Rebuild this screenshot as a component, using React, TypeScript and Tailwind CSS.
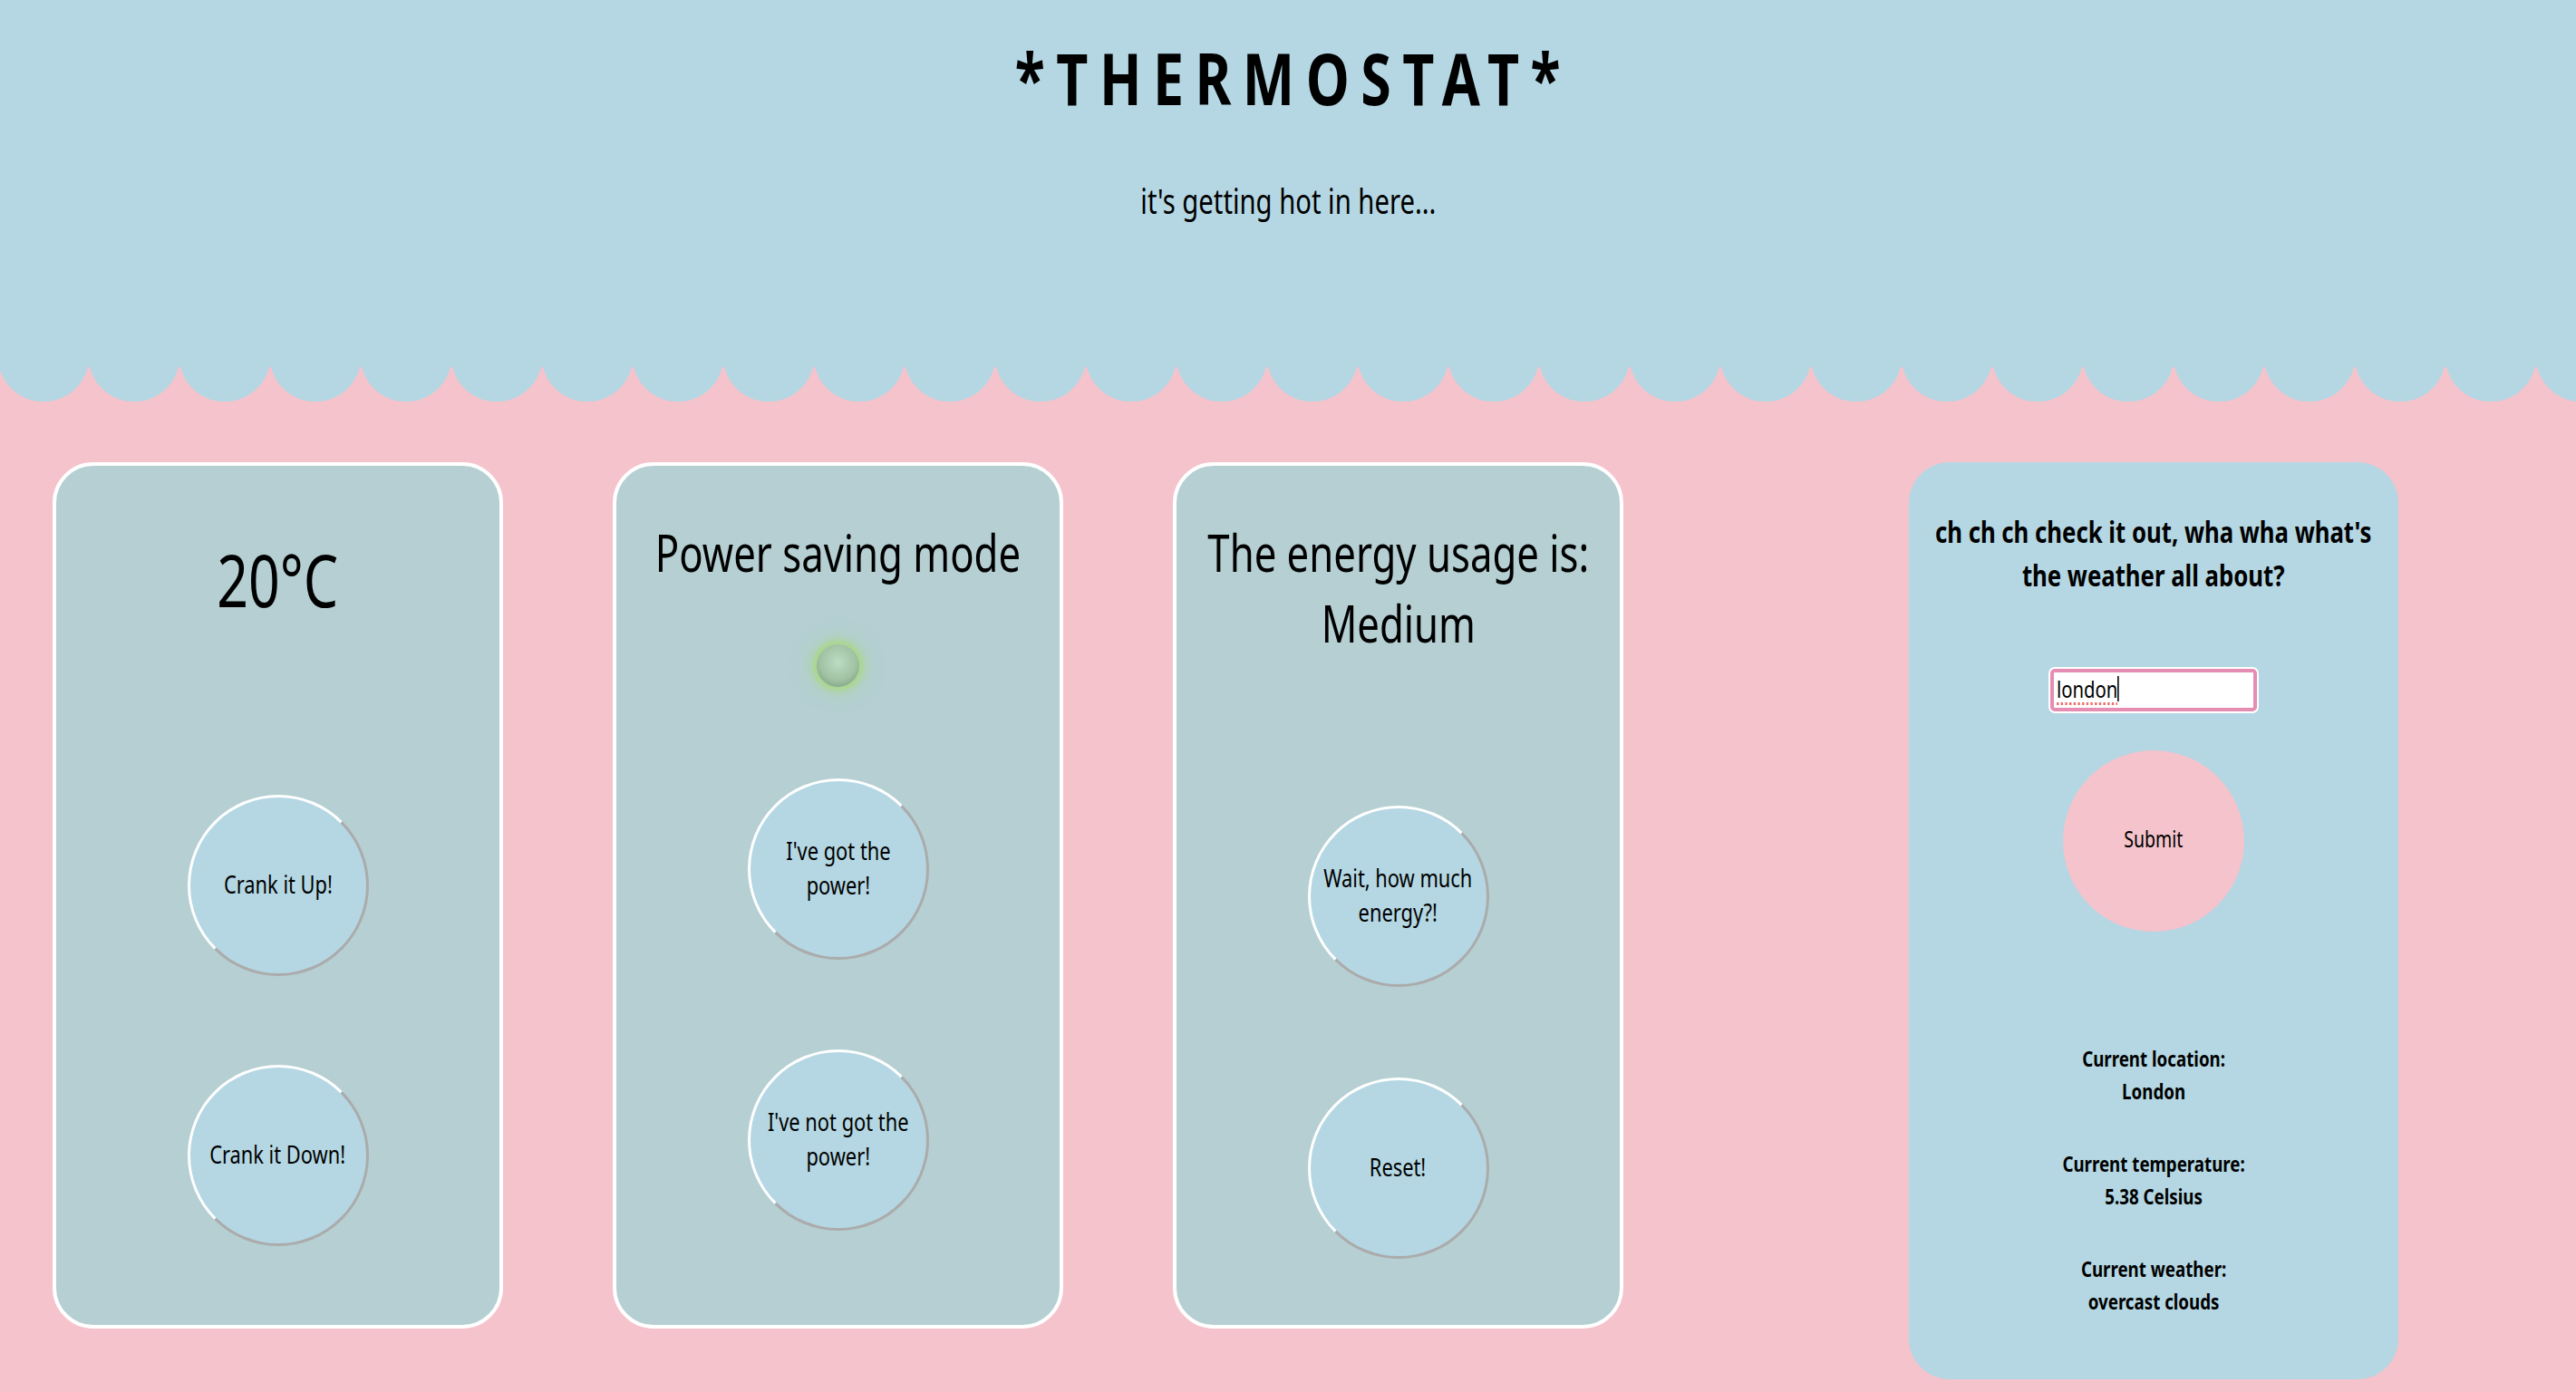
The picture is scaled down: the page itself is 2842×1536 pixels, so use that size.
import React from "react";

// Noto Sans squeezed horizontally stands in for the narrow face of the original
const narrow = "scale-x-[0.78]";

const RoundButton = ({ children }: { children: React.ReactNode }) => (
  <button className="w-[200px] h-[200px] shrink-0 rounded-full bg-[#b4d7e3] border-[3px] border-white [border-style:outset] flex items-center justify-center text-center px-[6px] pb-[4px] text-[28px] leading-[38px] whitespace-nowrap text-black">
    <span className={`inline-block ${narrow}`}>{children}</span>
  </button>
);

const Card = ({ children }: { children: React.ReactNode }) => (
  <div className="w-[497px] h-[956px] shrink-0 rounded-[45px] border-4 border-white bg-[#b5cfd3] flex flex-col items-center">
    {children}
  </div>
);

const App: React.FC = () => {
  return (
    <div className="min-h-screen bg-[#f5c3cb] text-black font-['Noto_Sans',sans-serif]">
      <header className="h-[405px] bg-[#b4d7e3] flex flex-col items-center">
        <h1 className={`mt-[47px] pl-[16px] text-[78px] font-bold leading-none tracking-[16px] whitespace-nowrap ${narrow}`}>
          *THERMOSTAT*
        </h1>
        <p className="mt-[76px] text-[39px] leading-none whitespace-nowrap scale-x-[0.75]">
          it's getting hot in here...
        </p>
      </header>
      <div className="h-[38px] [background-image:radial-gradient(circle_at_50%_-12px,#b4d7e3_50px,transparent_50.6px)] [background-size:100px_38px] [background-position:-2px_0] bg-repeat-x" />

      <main className="flex items-start pt-[67px] pl-[58px]">
        <div className="flex gap-[121px]">
          <Card>
            <h2 className="mt-[85px] text-[80px] leading-none whitespace-nowrap scale-x-[0.76]">20°C</h2>
            <div className="mt-[198px]">
              <RoundButton>Crank it Up!</RoundButton>
            </div>
            <div className="mt-[98px]">
              <RoundButton>Crank it Down!</RoundButton>
            </div>
          </Card>

          <Card>
            <h2 className={`mt-[67px] text-[56px] leading-none text-center whitespace-nowrap ${narrow}`}>
              Power saving mode
            </h2>
            <div className="mt-[74px] w-[47px] h-[47px] rounded-full bg-[radial-gradient(circle_at_50%_42%,#bcdcc4_0%,#a2c2a4_55%,#6f8f72_100%)] shadow-[0_0_8px_3px_#a6da74,0_0_22px_9px_rgba(170,220,130,0.3)]" />
            <div className="mt-[101px]">
              <RoundButton>
                I've got the
                <br />
                power!
              </RoundButton>
            </div>
            <div className="mt-[99px]">
              <RoundButton>
                I've not got the
                <br />
                power!
              </RoundButton>
            </div>
          </Card>

          <Card>
            <h2 className={`mt-[56px] text-[56px] leading-[78px] text-center whitespace-nowrap ${narrow}`}>
              The energy usage is:
              <br />
              Medium
            </h2>
            <div className="mt-[163px]">
              <RoundButton>
                Wait, how much
                <br />
                energy?!
              </RoundButton>
            </div>
            <div className="mt-[100px]">
              <RoundButton>Reset!</RoundButton>
            </div>
          </Card>
        </div>

        <section className="ml-[315px] w-[540px] shrink-0 rounded-[45px] bg-[#b4d7e3] flex flex-col items-center px-[20px] pt-[53px] pb-[68px]">
          <h3 className={`text-[33px] font-bold leading-[48px] text-center whitespace-nowrap ${narrow}`}>
            ch ch ch check it out, wha wha what's
            <br />
            the weather all about?
          </h3>
          <div className="mt-[79px] w-[228px] h-[47px] rounded-[5px] border-4 border-[#e68db3] ring-2 ring-white bg-white flex items-center pl-[3px] pb-[3px] text-[26px] leading-none">
            <span className={`inline-flex items-center origin-left ${narrow}`}>
              <span className="underline decoration-dotted decoration-[#f06b6b] decoration-[3px] underline-offset-[5px]">
                london
              </span>
              <span className="w-[2px] h-[28px] bg-black" />
            </span>
          </div>
          <button className="mt-[43px] w-[200px] h-[200px] rounded-full bg-[#f5c3cb] pb-[4px] text-[25px] text-black">
            <span className={`inline-block ${narrow}`}>Submit</span>
          </button>
          <div className={`mt-[122px] flex flex-col gap-[44px] text-[24px] font-bold leading-[36px] text-center whitespace-nowrap ${narrow}`}>
            <p>
              Current location:
              <br />
              London
            </p>
            <p>
              Current temperature:
              <br />
              5.38 Celsius
            </p>
            <p>
              Current weather:
              <br />
              overcast clouds
            </p>
          </div>
        </section>
      </main>
    </div>
  );
};

export default App;
